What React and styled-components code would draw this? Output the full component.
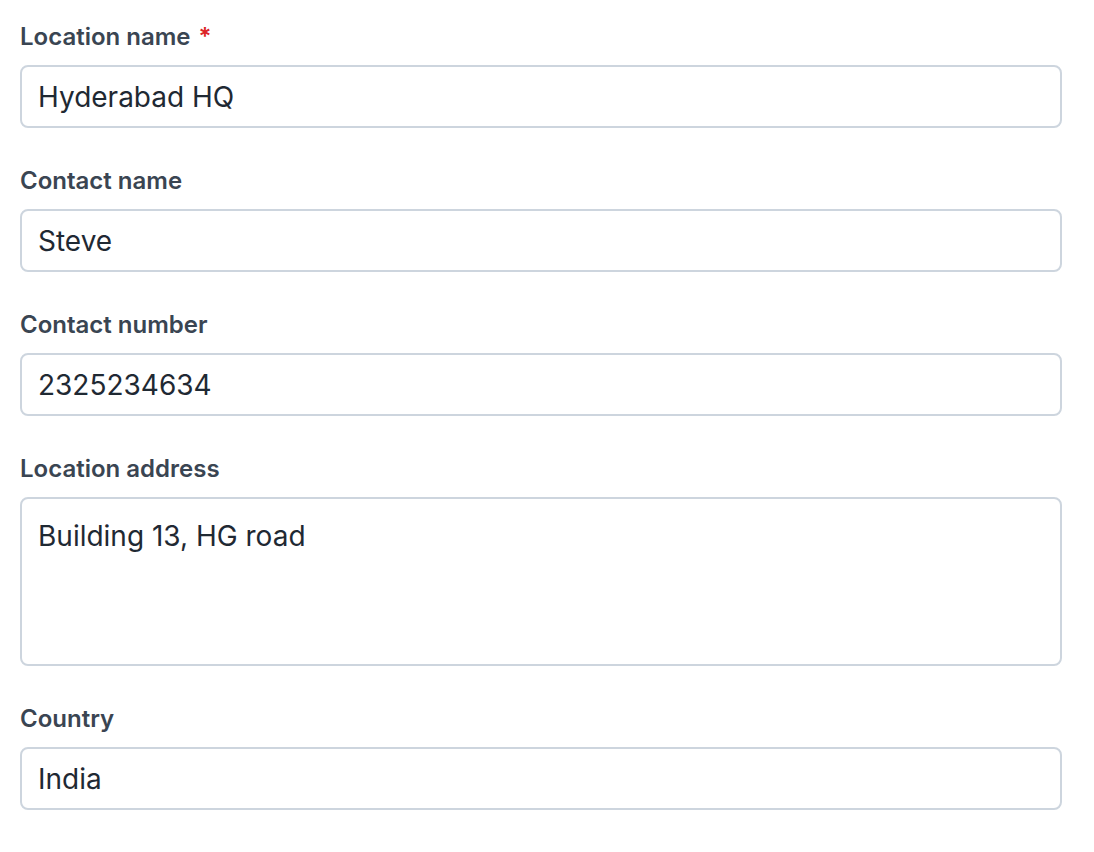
import styled, { createGlobalStyle } from "styled-components";

const GlobalStyle = createGlobalStyle`
  body {
    margin: 0;
    background: #ffffff;
    font-family: Inter, "Noto Sans", "Liberation Sans", sans-serif;
  }
`;

const fields = [
  { label: "Location name", value: "Hyderabad HQ", required: true },
  { label: "Contact name", value: "Steve" },
  { label: "Contact number", value: "2325234634" },
  { label: "Location address", value: "Building 13, HG road", multiline: true },
  { label: "Country", value: "India" },
];

const App = () => {
  return (
    <Form>
      <GlobalStyle />
      {fields.map((f) => (
        <Field key={f.label}>
          <Label>
            {f.label}
            {f.required && <Required>*</Required>}
          </Label>
          {f.multiline ? (
            <TextArea defaultValue={f.value} />
          ) : (
            <Input type="text" defaultValue={f.value} />
          )}
        </Field>
      ))}
    </Form>
  );
};

const Form = styled.form`
  display: flex;
  flex-direction: column;
  gap: 38px;
  width: 1042px;
  padding: 22px 0 0 20px;
`;

const Field = styled.div`
  display: flex;
  flex-direction: column;
  gap: 13px;
`;

const Label = styled.label`
  font-size: 24px;
  line-height: 30px;
  font-weight: 600;
  color: #3a4552;
`;

const Required = styled.span`
  color: #dc2626;
  margin-left: 8px;
`;

const Input = styled.input`
  box-sizing: border-box;
  width: 100%;
  height: 63px;
  padding: 0 16px;
  border: 2px solid #cdd5de;
  border-radius: 8px;
  background: #fff;
  font-family: inherit;
  font-size: 28px;
  color: #1f2933;
  outline: none;
`;

const TextArea = styled.textarea`
  box-sizing: border-box;
  width: 100%;
  height: 169px;
  padding: 19px 16px;
  border: 2px solid #cdd5de;
  border-radius: 8px;
  background: #fff;
  font-family: inherit;
  font-size: 28px;
  line-height: 36px;
  color: #1f2933;
  resize: none;
  outline: none;
`;

export default App;
